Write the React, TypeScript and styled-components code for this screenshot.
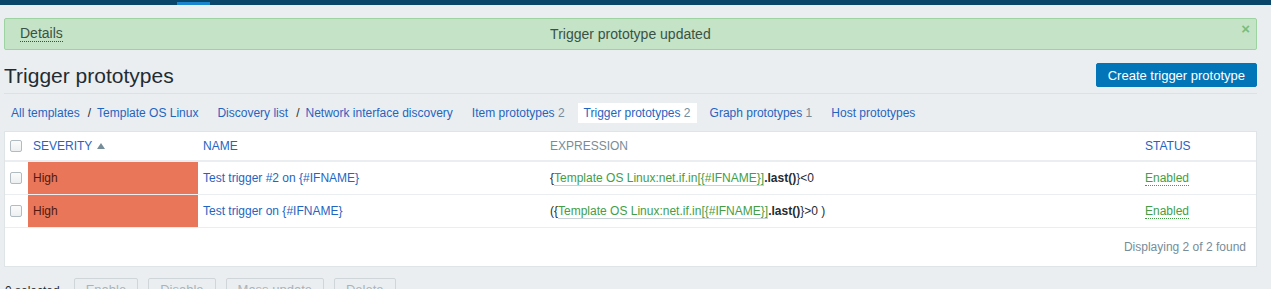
import React from "react";
import styled, { createGlobalStyle } from "styled-components";

const GlobalStyle = createGlobalStyle`
  html, body {
    margin: 0;
    padding: 0;
    overflow: hidden;
    background: #ebeef0;
  }
  body {
    font-family: "Liberation Sans", Arial, sans-serif;
    font-size: 12px;
    color: #1f2c33;
  }
  * {
    box-sizing: border-box;
  }
`;

const TopBar = styled.div`
  height: 5px;
  background: #0a466a;
  display: flex;
  align-items: flex-end;
  padding-left: 177px;
`;

const TopBarActive = styled.div`
  width: 33px;
  height: 3px;
  background: #1b86cf;
`;

const Page = styled.div`
  padding: 13px 14px 0 4px;
`;

const Message = styled.div`
  position: relative;
  height: 32px;
  display: flex;
  align-items: center;
  background: #c5e4c7;
  border: 1px solid #9dd3a0;
  border-radius: 2px;
  color: #3a5246;
  font-size: 14px;
  padding: 0 15px;
`;

const MessageDetails = styled.span`
  border-bottom: 1px dotted #3a5246;
  line-height: 15px;
`;

const MessageText = styled.span`
  flex: 1;
  text-align: center;
  margin-right: 43px;
`;

const MessageClose = styled.span`
  position: absolute;
  top: 3px;
  right: 6px;
  font-size: 15px;
  font-weight: bold;
  color: #79bd7c;
  line-height: 14px;
`;

const Header = styled.div`
  display: flex;
  justify-content: space-between;
  align-items: flex-start;
  padding: 13px 0 5px;
  border-bottom: 1px solid #dde1e4;
`;

const Title = styled.h1`
  margin: 0;
  padding-top: 1px;
  font-size: 21px;
  font-weight: normal;
  line-height: 24px;
  color: #1f2c33;
`;

const PrimaryButton = styled.button`
  height: 24px;
  padding: 0 11px;
  border: 1px solid #0275b8;
  border-radius: 2px;
  background: #0275b8;
  color: #fff;
  font-family: inherit;
  font-size: 13px;
`;

const Nav = styled.div`
  display: flex;
  align-items: center;
  gap: 7px;
  margin: 9px 0 8px;
  padding-left: 1px;
`;

const CrumbGroup = styled.div`
  display: flex;
  align-items: center;
`;

const NavItem = styled.a<{ $active?: boolean }>`
  display: block;
  line-height: 20px;
  padding: 0 6px;
  color: #1f65c1;
  text-decoration: none;
  background: ${({ $active }) => ($active ? "#fff" : "transparent")};
`;

const Separator = styled.span`
  color: #1f2c33;
  margin-left: 2px;
`;

const Count = styled.span`
  color: #768d99;
`;

const Panel = styled.div`
  background: #fff;
  border: 1px solid #dfe4e7;
`;

const Table = styled.table`
  width: 100%;
  border-collapse: collapse;
  table-layout: fixed;
`;

const Th = styled.th<{ $sortable?: boolean }>`
  height: 29px;
  padding: 0 5px;
  text-align: left;
  font-weight: normal;
  font-size: 12px;
  color: ${({ $sortable }) => ($sortable ? "#1f65c1" : "#768d99")};
  border-bottom: 2px solid #ebeef0;
  white-space: nowrap;
`;

const Td = styled.td<{ $severity?: boolean }>`
  height: 33px;
  padding: 0 5px;
  border-bottom: 1px solid #ebeef0;
  background: ${({ $severity }) => ($severity ? "#e97659" : "transparent")};
  color: ${({ $severity }) => ($severity ? "#52190f" : "#1f2c33")};
  white-space: nowrap;
`;

const CheckBox = styled.span`
  display: block;
  width: 12px;
  height: 12px;
  border: 1px solid #b1bcc2;
  border-radius: 2px;
  background: linear-gradient(#fbfbfb, #eceff1);
`;

const SortArrow = styled.span`
  display: inline-block;
  margin-left: 5px;
  vertical-align: 1px;
  border-left: 4px solid transparent;
  border-right: 4px solid transparent;
  border-bottom: 6px solid #768d99;
`;

const Link = styled.a`
  color: #1f65c1;
  text-decoration: none;
`;

const ItemLink = styled.span`
  color: #429e47;
  border-bottom: 1px solid #c8d2d7;
`;

const Func = styled.b`
  color: #1f2c33;
`;

const StatusLink = styled.span`
  color: #429e47;
  border-bottom: 1px dotted #429e47;
`;

const Footer = styled.div`
  height: 38px;
  display: flex;
  align-items: center;
  justify-content: flex-end;
  padding-right: 10px;
  color: #768d99;
`;

const Actions = styled.div`
  display: flex;
  align-items: flex-start;
  margin-top: 11px;
  padding-left: 1px;
`;

const SelectedCount = styled.span`
  margin: 6px 14px 0 0;
  color: #1f2c33;
`;

const ActionButton = styled.button`
  height: 24px;
  padding: 0 11px;
  margin-right: 10px;
  border: 1px solid #cfd6d9;
  border-radius: 2px;
  background: transparent;
  color: #a9b4ba;
  font-family: inherit;
  font-size: 13px;
`;

interface Trigger {
  name: string;
  prefix: string;
  suffix: string;
}

const triggers: Trigger[] = [
  { name: "Test trigger #2 on {#IFNAME}", prefix: "{", suffix: "}<0" },
  { name: "Test trigger on {#IFNAME}", prefix: "({", suffix: "}>0 )" },
];

const App: React.FC = () => {
  return (
    <>
      <GlobalStyle />
      <TopBar>
        <TopBarActive />
      </TopBar>
      <Page>
        <Message>
          <MessageDetails>Details</MessageDetails>
          <MessageText>Trigger prototype updated</MessageText>
          <MessageClose>×</MessageClose>
        </Message>

        <Header>
          <Title>Trigger prototypes</Title>
          <PrimaryButton>Create trigger prototype</PrimaryButton>
        </Header>

        <Nav>
          <CrumbGroup>
            <NavItem>All templates</NavItem>
            <Separator>/</Separator>
            <NavItem>Template OS Linux</NavItem>
          </CrumbGroup>
          <CrumbGroup>
            <NavItem>Discovery list</NavItem>
            <Separator>/</Separator>
            <NavItem>Network interface discovery</NavItem>
          </CrumbGroup>
          <NavItem>
            Item prototypes <Count>2</Count>
          </NavItem>
          <NavItem $active>
            Trigger prototypes <Count>2</Count>
          </NavItem>
          <NavItem>
            Graph prototypes <Count>1</Count>
          </NavItem>
          <NavItem>Host prototypes</NavItem>
        </Nav>

        <Panel>
          <Table>
            <colgroup>
              <col style={{ width: 23 }} />
              <col style={{ width: 170 }} />
              <col style={{ width: 347 }} />
              <col style={{ width: 595 }} />
              <col />
            </colgroup>
            <thead>
              <tr>
                <Th>
                  <CheckBox />
                </Th>
                <Th $sortable>
                  SEVERITY
                  <SortArrow />
                </Th>
                <Th $sortable>NAME</Th>
                <Th>EXPRESSION</Th>
                <Th $sortable>STATUS</Th>
              </tr>
            </thead>
            <tbody>
              {triggers.map((t) => (
                <tr key={t.name}>
                  <Td>
                    <CheckBox />
                  </Td>
                  <Td $severity>High</Td>
                  <Td>
                    <Link>{t.name}</Link>
                  </Td>
                  <Td>
                    {t.prefix}
                    <ItemLink>Template OS Linux:net.if.in[{"{#IFNAME}"}]</ItemLink>
                    <Func>.last()</Func>
                    {t.suffix}
                  </Td>
                  <Td>
                    <StatusLink>Enabled</StatusLink>
                  </Td>
                </tr>
              ))}
            </tbody>
          </Table>
          <Footer>Displaying 2 of 2 found</Footer>
        </Panel>

        <Actions>
          <SelectedCount>0 selected</SelectedCount>
          <ActionButton>Enable</ActionButton>
          <ActionButton>Disable</ActionButton>
          <ActionButton>Mass update</ActionButton>
          <ActionButton>Delete</ActionButton>
        </Actions>
      </Page>
    </>
  );
};

export default App;
